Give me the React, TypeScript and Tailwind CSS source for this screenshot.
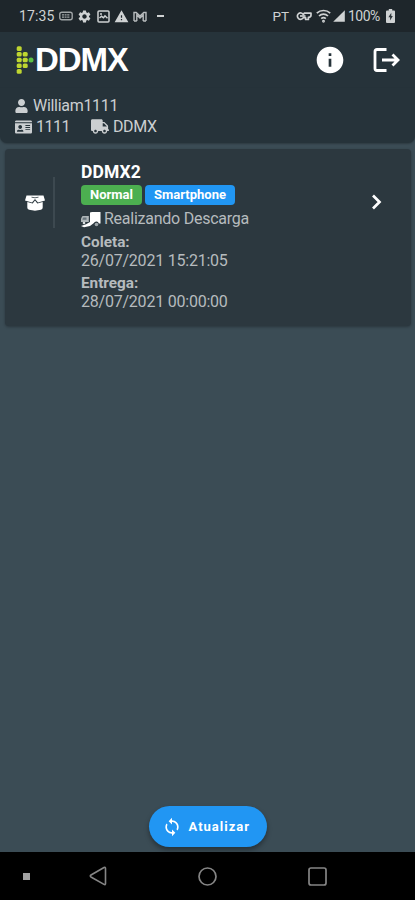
import React from "react";
import { FaUser, FaIdCard, FaTruck } from "react-icons/fa";
import { MdSettings, MdWarning, MdInfo, MdSync, MdSignalCellular4Bar } from "react-icons/md";

function StatusBar() {
  return (
    <div className="flex h-8 shrink-0 items-center bg-[#1e262b] pl-[19px] pr-[20px] text-[14px] leading-4 text-[#cfd2d3]">
      <span className="w-[40px] tracking-[0.1px]">17:35</span>
      <svg className="h-[10px] w-[14px]" viewBox="0 0 14 10" fill="none" stroke="#a0a5a7">
        <rect x=".8" y="1.2" width="12.4" height="7.6" rx="2" strokeWidth="1.4" />
        <path d="M3 3.9h8M3 6.1h8" strokeWidth="1.4" strokeDasharray="2 .6" />
      </svg>
      <MdSettings className="ml-[4px] h-[15px] w-[15px]" />
      <svg className="ml-[5px] h-[13px] w-[13px]" viewBox="0 0 13 13" fill="none" stroke="#cfd2d3" strokeWidth="1.5">
        <rect x="1" y="1" width="11" height="11" rx="1" />
        <path d="M3 4h2M2.5 8l2-1.7 2 1.5 1.5-2 2.5 2.4" />
      </svg>
      <MdWarning className="ml-[4px] h-[15px] w-[15px]" />
      <svg className="ml-[4px] h-[11px] w-[14px]" viewBox="0 0 14 11" fill="none" stroke="#b9bdbf" strokeWidth="1.4">
        <path d="M1 10V1.5l2.2 0L7 5l3.8-3.5H13V10M3.8 10V4L7 7l3.2-3v6M1 10h2.8M10.2 10H13" />
      </svg>
      <span className="ml-[10px] h-[2px] w-[7px] bg-[#cfd2d3]" />
      <span className="ml-auto mr-[7px] text-[13.5px]">PT</span>
      <svg className="h-[10px] w-[16px]" viewBox="0 0 16 10" fill="none" stroke="#cfd2d3" strokeWidth="1.7">
        <path d="M7.4 3.6A3.2 3.2 0 1 0 7.4 6.6H9.6V8.5H12.4V6.4Q15 6 15 4.2V2.2H8.2Z" strokeLinejoin="round" />
        <path d="M4 5h5.5" />
      </svg>
      <svg className="ml-[4px] h-[14px] w-[15px]" viewBox="0 0 15 14" fill="none" stroke="#cfd2d3" strokeWidth="1.7">
        <path d="M.8 4.2a9.6 9.6 0 0 1 13.4 0M3 7a6.4 6.4 0 0 1 9 0M5.2 9.7a3.4 3.4 0 0 1 4.6 0" />
        <circle cx="7.5" cy="12.3" r=".6" />
      </svg>
      <MdSignalCellular4Bar className="ml-[1px] h-[14px] w-[14px]" />
      <span className="ml-[2px] w-[38px] whitespace-nowrap text-[14px] tracking-[-0.5px]">100%</span>
      <svg className="h-[14px] w-[9px]" viewBox="0 0 9 14">
        <path d="M2.8 0h3.4v1.5H8q1 0 1 1V13q0 1-1 1H1q-1 0-1-1V2.5q0-1 1-1h1.8z" fill="#cfd2d3" />
        <path d="M5.3 3.7 2.4 8.3h1.7v3.2l2.7-4.6H5.3z" fill="#2c3439" />
      </svg>
    </div>
  );
}

const dots = [
  [3.2, 2.6], [3.2, 8.3], [3.2, 14], [3.2, 19.7], [3.2, 25.4],
  [9.2, 8.3], [9.2, 14], [9.2, 19.7],
];

function Header() {
  return (
    <header className="flex h-[56px] shrink-0 items-center bg-[#26333a] pl-[16px] pr-[15px] text-white">
      <svg className="h-[28px] w-[18px]" viewBox="0 0 18 28">
        {dots.map(([x, y]) => (
          <rect key={`${x}-${y}`} x={x - 2.5} y={y - 2.3} width="5" height="4.6" rx="1.5" fill="#bfd630" />
        ))}
        <circle cx="15" cy="14" r="2.5" fill="#5cc043" />
      </svg>
      <span className="ml-[1px] w-[98px] whitespace-nowrap font-['Liberation_Sans',sans-serif] text-[33px] font-bold leading-[32px] tracking-[-1.1px]">DDMX</span>
      <MdInfo className="ml-auto h-[32px] w-[32px]" />
      <svg className="ml-[27px] h-[26px] w-[27px]" viewBox="0 0 27 26" fill="none" stroke="white" strokeWidth="2.8">
        <path d="M13.5 2.5H4Q2 2.5 2 4.5v17Q2 23.5 4 23.5h9.5M9 13h16M19.5 7.5l5.5 5.5-5.5 5.5" />
      </svg>
    </header>
  );
}

function UserPanel() {
  return (
    <section className="h-[55px] shrink-0 rounded-b-[7px] bg-[#26333a] pl-[15px] pt-[7px] text-[16px] text-[#cbcfd1] shadow-[0_1px_2px_rgba(0,0,0,0.25)]">
      <div className="flex h-[21px] items-center">
        <FaUser className="h-[14px] w-[13px]" />
        <span className="ml-[5px] tracking-[-0.3px]">William1111</span>
      </div>
      <div className="flex h-[21px] items-center">
        <FaIdCard className="h-[16px] w-[17px]" />
        <span className="ml-[4px] w-[55px] tracking-[-0.5px]">1111</span>
        <FaTruck className="h-[15px] w-[18px]" />
        <span className="ml-[4px] tracking-[-0.4px]">DDMX</span>
      </div>
    </section>
  );
}

function TripCard() {
  return (
    <article className="mx-[5px] mr-[4px] mt-[6px] flex h-[177px] shrink-0 rounded-[4px] bg-[#2c383f] shadow-[0_1px_3px_rgba(0,0,0,0.3)]">
      <div className="mt-[28px] flex h-[51px] w-[50px] items-center border-r-2 border-[#3d4950] pl-[20px]">
        <svg className="h-[16px] w-[20px]" viewBox="0 0 20 16" fill="white">
          <path d="M1.5.5h17L20 5.6 13 7.5 10 4 7 7.5 0 5.6z" />
          <path d="M2.3 7 7.7 8.6 10 5.6l2.3 3 5.4-1.6v5.5q0 1.800-1.800 2.200L10 15.800l-5.900-1.100q-1.800-.4-1.800-2.200z" />
          <path d="M6.500 2.200 10 2.800l3.500-.6" fill="none" stroke="#2c383f" strokeWidth=".8" />
        </svg>
      </div>
      <div className="ml-[26px] pt-[13px] text-[16px] text-[#b6bbbe]">
        <h2 className="h-[23px] text-[17.5px] font-bold leading-[21px] tracking-[0.1px] text-white">DDMX2</h2>
        <div className="flex gap-[3px] text-[13px] font-bold leading-[20px] text-white">
          <span className="h-[20px] w-[61px] rounded-[4px] bg-[#4caf50] text-center">Normal</span>
          <span className="h-[20px] w-[90px] rounded-[4px] bg-[#2196f3] text-center">Smartphone</span>
        </div>
        <div className="mt-[3px] flex h-[22px] items-center">
          <svg className="h-[17px] w-[20px]" viewBox="0 0 20 17">
            <path d="M1.5 5h6.3v6H0V7.5z" fill="#aeb5b8" />
            <path d="M2.3 6.5h3.2v2.2H1.5V8z" fill="#66737a" />
            <path d="M9 1.500 11 1h8.500v11.500h-1.700a2.600 2.600 0 0 0-4.900-.5L9 15 3 16.300 0 15 5 13.200 9 11z" fill="white" />
            <circle cx="15.500" cy="13.500" r="1.800" fill="#9ca4a8" />
            <circle cx="3" cy="12" r="1.300" fill="#d9dddf" />
          </svg>
          <span className="ml-[3px] whitespace-nowrap tracking-[-0.25px]">Realizando Descarga</span>
        </div>
        <div className="mt-[3px] text-[15.3px] font-bold leading-[18px]">Coleta:</div>
        <div className="leading-[19px] tracking-[-0.22px]">26/07/2021 15:21:05</div>
        <div className="mt-[4px] text-[15.3px] font-bold leading-[18px]">Entrega:</div>
        <div className="leading-[19px] tracking-[-0.22px]">28/07/2021 00:00:00</div>
      </div>
      <svg className="ml-auto mr-[28px] mt-[45px] h-[16px] w-[12px]" viewBox="0 0 12 16" fill="none" stroke="white" strokeWidth="2.7">
        <path d="M2 1.5 8.5 8 2 14.5" />
      </svg>
    </article>
  );
}

function RefreshButton() {
  return (
    <button className="mx-auto mb-[5px] mt-auto flex h-[41px] w-[118px] shrink-0 items-center rounded-full bg-[#2196f3] pl-[13px] text-[13px] font-bold tracking-[1px] text-white shadow-[0_3px_5px_rgba(0,0,0,0.35)]">
      <MdSync className="h-[20px] w-[20px]" />
      <span className="ml-[7px] mt-[1px]">Atualizar</span>
    </button>
  );
}

function NavigationBar() {
  return (
    <nav className="flex h-[48px] shrink-0 items-center bg-black pl-[23px] text-[#858585]">
      <span className="h-[7px] w-[7px] bg-[#a2a2a2]" />
      <svg className="ml-[59px] h-[20px] w-[18px]" viewBox="0 0 18 20" fill="none" stroke="currentColor" strokeWidth="1.6">
        <path d="M15 1.5Q16.5.8 16.5 2.5v15q0 1.7-1.5.9L2 11q-1.4-1 0-2z" />
      </svg>
      <svg className="ml-[91px] h-[19px] w-[19px]" viewBox="0 0 19 19" fill="none" stroke="currentColor" strokeWidth="1.7">
        <circle cx="9.5" cy="9.5" r="8.5" />
      </svg>
      <svg className="ml-[91px] h-[19px] w-[19px]" viewBox="0 0 19 19" fill="none" stroke="currentColor" strokeWidth="1.7">
        <rect x="1" y="1" width="17" height="17" rx="2" />
      </svg>
    </nav>
  );
}

export default function App() {
  return (
    <div className="flex h-[900px] w-[415px] flex-col overflow-hidden bg-[#3b4c55] font-[Roboto,sans-serif]">
      <StatusBar />
      <Header />
      <UserPanel />
      <main className="flex min-h-0 flex-1 flex-col">
        <TripCard />
        <RefreshButton />
      </main>
      <NavigationBar />
    </div>
  );
}
